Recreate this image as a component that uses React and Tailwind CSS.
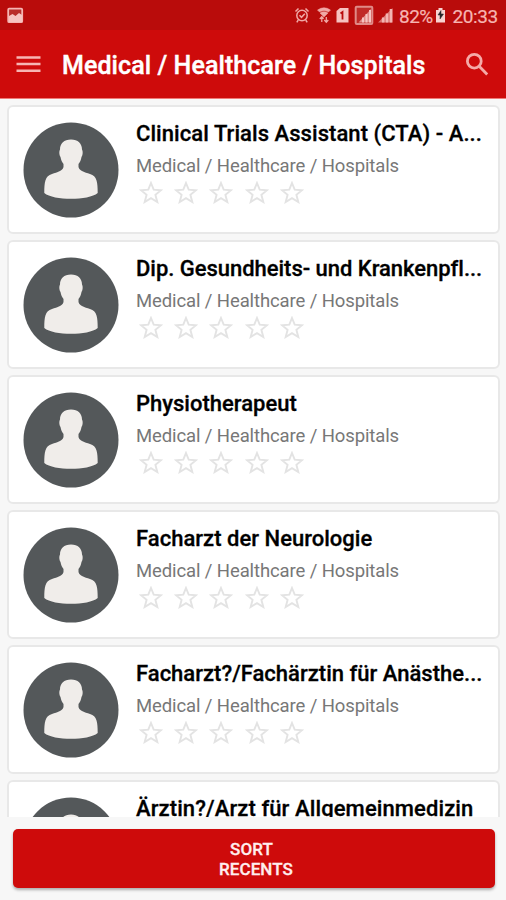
import React from "react";

const jobs = [
  { title: "Clinical Trials Assistant (CTA) - A...", spacing: "tracking-[0.06px]" },
  { title: "Dip. Gesundheits- und Krankenpfl...", spacing: "tracking-[-0.03px]" },
  { title: "Physiotherapeut", spacing: "tracking-[0px]" },
  { title: "Facharzt der Neurologie", spacing: "tracking-[0.02px]" },
  { title: "Facharzt?/Fachärztin für Anästhe...", spacing: "tracking-[0.01px]" },
  { title: "Ärztin?/Arzt für Allgemeinmedizin", spacing: "tracking-[0.1px]" },
];

function StatusIcons() {
  return (
    <svg className="h-[30px] w-[104px] shrink-0" viewBox="292 0 104 30" fill="none" stroke="#f0a9a6" strokeWidth="1.5">
      <circle cx="302" cy="15.5" r="5.2" />
      <path d="M299.5 15.3l2 2 3.3-3.6M295.500 11.5l3-3M308.500 11.5l-3-3M298.3 20l-1.5 2.3M305.7 20l1.5 2.3" />
      <g transform="translate(324 0)">
        <path d="M-6.5 10Q0 5.5 6.5 10L4.5 12Q0 9.5-4.5 12ZM-4 13Q0 10.5 4 13L0 17Z" fill="#f0a9a6" strokeWidth="0.5" />
        <path d="M-2.2 22v-5m-2 2 2-2.2 1.8 2M2.3 17v5m-2-2 2 2.2 2-2.2" strokeWidth="1.3" />
      </g>
      <path d="M336.5 11l3.5-3h8.5v14.500h-12Z" fill="#f6c3c0" stroke="none" />
      <path d="M340.500 13.500l2-1.500v7.500" stroke="#b90c0b" strokeWidth="1.8" />
      <rect x="355.700" y="6.700" width="16.600" height="17.300" rx="1" fill="#c02a27" stroke="#e08a87" strokeWidth="2" />
      <path d="M358.500 22.500L371 9v13.500Z" fill="#e08a87" stroke="none" />
      <path d="M363 22.500v-5M366.500 22.500v-8.500M370 22.500V10" stroke="#f6c3c0" strokeWidth="2" />
      <path d="M378 22.500L392.500 8v14.500Z" fill="#d9716e" stroke="none" />
      <path d="M383.200 22.500v-5M387 22.500v-9M391 22.500V9" strokeWidth="2.600" stroke="#f3b4b1" />
    </svg>
  );
}

function Star() {
  return (
    <svg className="h-[23px] w-[24px]" viewBox="0 0 24 23" fill="none" stroke="#e3e3e3" strokeWidth="1.9">
      <path d="M12 2l2.700 6.700 7.300.5-5.600 4.600 1.900 7.200L12 17.100 5.700 21l1.900-7.200L2 9.200l7.300-.5Z" />
    </svg>
  );
}

function Avatar() {
  return (
    <svg className="mt-[15px] size-[96px] shrink-0" viewBox="0 0 96 96">
      <circle cx="48" cy="48" r="47.500" fill="#54585a" />
      <path d="M48 17.500C41 17.500 37 21.500 37 27.500C36 29 36 33 37.500 35C38 38 39 40 40.500 42V45C39.500 49 34.500 50.300 29 52C22 54 21.300 60 21.300 71C26 75 37 76.800 48 76.800S70 75 74.700 71C74.700 60 74 54 67 52C61.500 50.300 56.500 49 55.500 45V42C57 40 58 38 58.500 35C60 33 60 29 59 27.500C59 21.500 55 17.500 48 17.500Z" fill="#f0edea" />
    </svg>
  );
}

function JobCard({ title, spacing }) {
  return (
    <article className="flex h-[129px] shrink-0 rounded-[6px] border-2 border-[#e8e8e8] bg-white pl-[14px]">
      <Avatar />
      <div className="ml-[17px] min-w-0 pt-[13.500px]">
        <h2 className={`h-[26px] text-[22px] leading-[26px] font-medium whitespace-nowrap text-black [-webkit-text-stroke:0.3px_#000] ${spacing}`}>{title}</h2>
        <p className="mt-[8.500px] text-[18.500px] leading-[22px] tracking-[-0.11px] whitespace-nowrap text-[#777777]">Medical / Healthcare / Hospitals</p>
        <div className="mt-[4px] ml-[3px] flex gap-[11.200px]">
          {[0, 1, 2, 3, 4].map((i) => <Star key={i} />)}
        </div>
      </div>
    </article>
  );
}

export default function App() {
  return (
    <div className="flex h-[900px] w-[506px] flex-col overflow-hidden bg-[#f7f7f7] font-['Roboto',sans-serif]">
      <div className="flex h-[30px] shrink-0 items-center bg-[#b90c0b] pl-[7px] text-[#f6b5b2]">
        <svg className="size-[17px]" viewBox="0 0 17 17">
          <rect x="1.200" y="1.700" width="14" height="13.500" rx="1" fill="#b92d2a" stroke="#f6b5b2" strokeWidth="1.800" />
          <path d="M2 9l3.500-2 3 2L12 6l3 2v7H2Z" fill="#f6c5c2" />
        </svg>
        <div className="ml-[268px]"><StatusIcons /></div>
        <span className="ml-[3px] w-[36px] pt-[2px] text-[19px] leading-none tracking-[-0.5px] [-webkit-text-stroke:0.2px_#f6b5b2]">82%</span>
        <svg className="h-[30px] w-[11px] shrink-0" viewBox="0 0 11 30">
          <path d="M1 10h2.500V8h4v2H10v12.500H1Z" fill="#f8d4d1" />
          <path d="M6 10.500L3 15h2v4l3.500-5H6Z" fill="#28282b" stroke="#28282b" strokeWidth=".5" />
        </svg>
        <span className="ml-[6.500px] pt-[2px] text-[19px] leading-none tracking-[-0.4px] [-webkit-text-stroke:0.2px_#f6b5b2]">20:33</span>
      </div>
      <header className="flex h-[69px] shrink-0 items-center border-b border-[#ee7b78] bg-[#ce0b0b] pl-[16px]">
        <svg className="h-[18px] w-[25px]" viewBox="0 0 25 18" stroke="#f7b5b3" strokeWidth="2.400">
          <path d="M.5 2.500h24M.5 9h24M.5 15.800h24" />
        </svg>
        <h1 className="ml-[21px] w-[396px] pt-[4px] text-[25px] leading-[30px] font-medium tracking-[0.08px] whitespace-nowrap text-white [-webkit-text-stroke:0.4px_#fff]">Medical / Healthcare / Hospitals</h1>
        <svg className="ml-[7px] size-[24px]" viewBox="0 0 24 24" fill="none" stroke="#f5aaa7" strokeWidth="2.800">
          <circle cx="9.300" cy="9.200" r="6.900" />
          <path d="M14.200 14.200l8 8.300" />
        </svg>
      </header>
      <main className="flex h-[718px] shrink-0 flex-col gap-[6px] overflow-hidden px-[7px] pr-[6px] pt-[6px]">
        {jobs.map((job) => <JobCard key={job.title} {...job} />)}
      </main>
      <footer className="pt-[12px] pl-[12.500px]">
        <button className="flex h-[59px] w-[482px] flex-col items-center justify-center rounded-[5px] bg-[#ce0b0b] pt-px pl-[5px] text-[17px] leading-[20px] font-medium tracking-[0.1px] text-[#ffeeee] shadow-[0_2px_3px_rgba(0,0,0,0.3)] [-webkit-text-stroke:0.3px_#ffeeee]">
          <span className="mr-[9px]">SORT</span>
          <span>RECENTS</span>
        </button>
      </footer>
    </div>
  );
}
